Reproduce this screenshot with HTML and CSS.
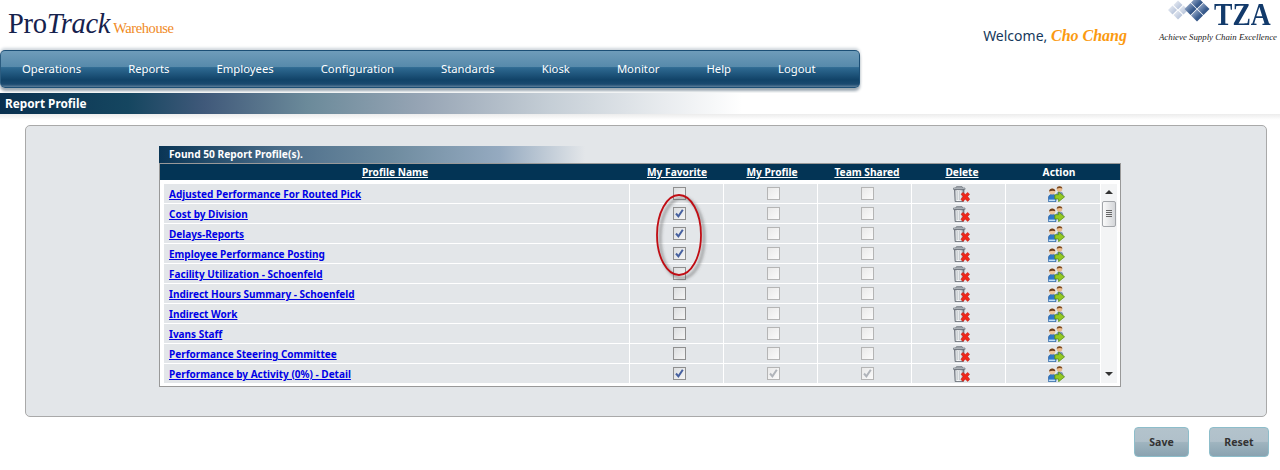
FILE: index.html
```html
<!DOCTYPE html>
<html lang="en">
<head>
<meta charset="utf-8">
<title>Report Profile</title>
<link rel="stylesheet" href="styles.css">
</head>
<body>
<svg class="defs" width="0" height="0" aria-hidden="true">
  <defs>
    <linearGradient id="can" x1="0" x2="1" y1="0" y2="0">
      <stop offset="0" stop-color="#a4aab1"/><stop offset=".3" stop-color="#fafbfb"/><stop offset=".7" stop-color="#e2e5e8"/><stop offset="1" stop-color="#6d747c"/>
    </linearGradient>
    <linearGradient id="dlight" x1="0" x2="1" y1="0" y2="1">
      <stop offset="0" stop-color="#eef1f6"/><stop offset="1" stop-color="#a9b8d3"/>
    </linearGradient>
    <linearGradient id="ddark" x1="0" x2="1" y1="0" y2="1">
      <stop offset="0" stop-color="#b4c2da"/><stop offset=".6" stop-color="#3d5f90"/><stop offset="1" stop-color="#1d3f70"/>
    </linearGradient>
    <symbol id="trash" viewBox="0 0 17 16">
      <path d="M3.500.5h5.500l.8 1.400H2.700z" fill="#e6e8eb" stroke="#767d85" stroke-width=".8"/>
      <path d="M.5 2h11.500v1.500H.5z" fill="#cdd2d7" stroke="#767d85" stroke-width=".8"/>
      <path d="M1.500 3.700h9.500l-.6 11.800H2.100z" fill="url(#can)" stroke="#5f666e" stroke-width=".8"/>
      <path d="M4.300 5v9M6.300 5v9" stroke="#aeb3b9" stroke-width=".7"/>
      <path d="M8 8.200l2-1.700 2.300 1.900 2.300-1.900 2 1.700-2 2.300 2.200 2.700-2 2.200-2.500-2.200-2.500 2.200-1.900-2.200 2.200-2.700z" fill="#f0281a" stroke="#b81a12" stroke-width=".5"/>
    </symbol>
    <symbol id="people" viewBox="0 0 17 16">
      <path d="M8 10c0-3 1.500-4.600 3.500-4.600s3.800 1.200 3.800 3.400V11H8z" fill="#7f96b5"/>
      <circle cx="11.500" cy="3" r="2.800" fill="#e9b98a"/>
      <path d="M8.700 2.800C9 -.3 14 -.5 14.400 2.600 13 1.700 10.500 1.800 8.700 2.800z" fill="#7b4a21"/>
      <path d="M.4 15.500v-3.400c0-2.600 1.800-3.800 3.800-3.800s3.800 1.200 3.800 3.800v3.400z" fill="#2f79c8" stroke="#1d5596" stroke-width=".6"/>
      <path d="M.8 13.600h6.500v1.500H.8z" fill="#c4e0f7"/>
      <circle cx="4.200" cy="5.400" r="3" fill="#eec39a"/>
      <path d="M1.100 5.600C1 1.700 7.100 1.600 7.400 5.200 5.500 4.300 3 4.500 1.100 5.600z" fill="#6f3f1a"/>
      <path d="M6.800 8.700h3.800V6l6 4.800-6 4.900V13H6.800z" fill="#94c823" stroke="#4f8a10" stroke-width=".7"/>
    </symbol>
    <symbol id="tick" viewBox="0 0 13 13">
      <path d="M3 6.500l2.400 2.800L9.800 2.800" fill="none" stroke="currentColor" stroke-width="2"/>
    </symbol>
  </defs>
</svg>

<header class="top">
  <div class="brand"><span class="pro">Pro<i>Track</i></span><span class="wh">Warehouse</span></div>
  <div class="account">
    <div class="welcome">Welcome, <em>Cho Chang</em></div>
    <div class="tza">
      <div class="tza-row">
        <svg class="tza-mark" width="48" height="22" viewBox="0 0 48 22" aria-hidden="true">
          <g fill="url(#dlight)">
            <path d="M12 .5l4.500 4.500L12 9.500 7.500 5z"/>
            <path d="M6.500 5.500L11 10l-4.500 4.500L2 10z"/>
            <path d="M17.500 5.500L22 10l-4.500 4.500L13 10z"/>
            <path d="M12 10.500l4.500 4.500-4.500 4.500L7.500 15z"/>
          </g>
          <g fill="url(#ddark)">
            <path d="M31 -3.500l6 6-6 6-6-6z"/>
            <path d="M24.500 3l6 6-6 6-6-6z"/>
            <path d="M37.500 3l6 6-6 6-6-6z"/>
            <path d="M31 9.500l6 6-6 6-6-6z"/>
          </g>
        </svg>
        <span class="tza-name">TZA</span>
      </div>
      <div class="tza-tag">Achieve Supply Chain Excellence</div>
    </div>
  </div>
</header>

<nav class="nav">
  <a>Operations</a><a>Reports</a><a>Employees</a><a>Configuration</a><a>Standards</a><a>Kiosk</a><a>Monitor</a><a>Help</a><a>Logout</a>
</nav>

<div class="title">Report Profile</div>

<main class="panel">
  <div class="found">Found 50 Report Profile(s).</div>
  <div class="grid">
    <div class="grid-head">
      <a>Profile Name</a><a>My Favorite</a><a>My Profile</a><a>Team Shared</a><a>Delete</a><span>Action</span>
    </div>
    <div class="grid-body">
      <div class="rows">
        <div class="row"><a class="name">Adjusted Performance For Routed Pick</a><div class="cell"><span class="cb fav"></span></div><div class="cell"><span class="cb"></span></div><div class="cell"><span class="cb"></span></div><div class="cell"><svg class="ico"><use href="#trash"/></svg></div><div class="cell"><svg class="ico"><use href="#people"/></svg></div></div>
        <div class="row"><a class="name">Cost by Division</a><div class="cell"><span class="cb fav on"><svg><use href="#tick"/></svg></span></div><div class="cell"><span class="cb"></span></div><div class="cell"><span class="cb"></span></div><div class="cell"><svg class="ico"><use href="#trash"/></svg></div><div class="cell"><svg class="ico"><use href="#people"/></svg></div></div>
        <div class="row"><a class="name">Delays-Reports</a><div class="cell"><span class="cb fav on"><svg><use href="#tick"/></svg></span></div><div class="cell"><span class="cb"></span></div><div class="cell"><span class="cb"></span></div><div class="cell"><svg class="ico"><use href="#trash"/></svg></div><div class="cell"><svg class="ico"><use href="#people"/></svg></div></div>
        <div class="row"><a class="name">Employee Performance Posting</a><div class="cell"><span class="cb fav on"><svg><use href="#tick"/></svg></span></div><div class="cell"><span class="cb"></span></div><div class="cell"><span class="cb"></span></div><div class="cell"><svg class="ico"><use href="#trash"/></svg></div><div class="cell"><svg class="ico"><use href="#people"/></svg></div></div>
        <div class="row"><a class="name">Facility Utilization - Schoenfeld</a><div class="cell"><span class="cb fav"></span></div><div class="cell"><span class="cb"></span></div><div class="cell"><span class="cb"></span></div><div class="cell"><svg class="ico"><use href="#trash"/></svg></div><div class="cell"><svg class="ico"><use href="#people"/></svg></div></div>
        <div class="row"><a class="name">Indirect Hours Summary - Schoenfeld</a><div class="cell"><span class="cb fav"></span></div><div class="cell"><span class="cb"></span></div><div class="cell"><span class="cb"></span></div><div class="cell"><svg class="ico"><use href="#trash"/></svg></div><div class="cell"><svg class="ico"><use href="#people"/></svg></div></div>
        <div class="row"><a class="name">Indirect Work</a><div class="cell"><span class="cb fav"></span></div><div class="cell"><span class="cb"></span></div><div class="cell"><span class="cb"></span></div><div class="cell"><svg class="ico"><use href="#trash"/></svg></div><div class="cell"><svg class="ico"><use href="#people"/></svg></div></div>
        <div class="row"><a class="name">Ivans Staff</a><div class="cell"><span class="cb fav"></span></div><div class="cell"><span class="cb"></span></div><div class="cell"><span class="cb"></span></div><div class="cell"><svg class="ico"><use href="#trash"/></svg></div><div class="cell"><svg class="ico"><use href="#people"/></svg></div></div>
        <div class="row"><a class="name">Performance Steering Committee</a><div class="cell"><span class="cb fav"></span></div><div class="cell"><span class="cb"></span></div><div class="cell"><span class="cb"></span></div><div class="cell"><svg class="ico"><use href="#trash"/></svg></div><div class="cell"><svg class="ico"><use href="#people"/></svg></div></div>
        <div class="row"><a class="name">Performance by Activity (0%) - Detail</a><div class="cell"><span class="cb fav on"><svg><use href="#tick"/></svg></span></div><div class="cell"><span class="cb on off"><svg><use href="#tick"/></svg></span></div><div class="cell"><span class="cb on off"><svg><use href="#tick"/></svg></span></div><div class="cell"><svg class="ico"><use href="#trash"/></svg></div><div class="cell"><svg class="ico"><use href="#people"/></svg></div></div>
      </div>
      <div class="scroll">
        <span class="arrow up"></span>
        <span class="thumb"><i></i><i></i><i></i><i></i></span>
        <span class="arrow down"></span>
      </div>
    </div>
  </div>
  <svg class="ring" width="60" height="96" viewBox="0 0 60 96" aria-hidden="true">
    <defs><filter id="soft" x="-30%" y="-30%" width="160%" height="160%"><feGaussianBlur stdDeviation="1.800"/></filter></defs>
    <ellipse cx="27" cy="46" rx="22" ry="40" fill="none" stroke="#555" stroke-opacity=".55" stroke-width="2.500" filter="url(#soft)"/>
    <ellipse cx="24" cy="43" rx="22" ry="40" fill="none" stroke="#c00d14" stroke-width="1.800"/>
  </svg>
</main>

<div class="actions">
  <button class="btn save">Save</button>
  <button class="btn reset">Reset</button>
</div>
</body>
</html>
```
FILE: styles.css
```css
* { box-sizing: border-box; }
html, body { margin: 0; padding: 0; height: 470px; overflow: hidden; background: #fff; }
body { font-family: "Noto Sans", "DejaVu Sans", sans-serif; font-size: 11px; color: #222; }
.defs { position: absolute; }

.top { height: 47px; display: flex; justify-content: space-between; }
.brand { padding: 6px 0 0 8px; display: flex; align-items: baseline; height: 47px; }
.pro { font-family: "Liberation Serif", serif; font-size: 28.500px; line-height: 36px; color: #16224d; letter-spacing: -.3px; }
.pro i { font-style: italic; }
.wh { font-family: "Liberation Serif", serif; font-size: 14.500px; letter-spacing: -.4px; color: #f08a24; margin-left: 3px; }
.account { display: flex; }
.welcome { font-size: 14px; line-height: 20px; margin: 26px 32px 0 0; color: #16395c; white-space: nowrap; }
.welcome em { font-family: "Liberation Serif", serif; font-weight: bold; font-size: 16px; color: #fb9a10; }
.tza { width: 121px; white-space: nowrap; }
.tza-row { display: flex; height: 30px; padding-left: 7px; }
.tza-mark { flex: none; }
.tza-name { display: block; width: 57px; height: 30px; font-family: "Liberation Serif", serif; font-weight: bold; font-size: 31px; line-height: 30px; color: #123a6b; transform: scaleX(.89); transform-origin: left top; }
.tza-tag { font-family: "Liberation Serif", serif; font-style: italic; font-size: 8.800px; line-height: 12px; color: #222; margin-top: 1px; }

.nav {
  margin-top: 3px; width: 860px; height: 38px; padding-left: 21px;
  display: flex; gap: 47px; align-items: center;
  border: 1px solid #1c4f76; border-left-color: #2b5c80; border-radius: 5px;
  background: linear-gradient(#6f9cba 0, #578aab 44%, #2f6a92 46%, #114368 80%, #1a4a70 92%, #5d7e9a 100%);
  box-shadow: 0 -2px 3px #cfd6dc, 0 3px 3px #9aa6b0;
  color: #fff; font-size: 11.300px; line-height: 16px;
}
.nav a { white-space: nowrap; }

.title {
  position: relative; margin-top: 5px; height: 21px; padding-left: 5px;
  font-size: 11.800px; font-weight: bold; line-height: 20px; color: #fff;
  background: linear-gradient(90deg, #09304f 0, #154660 10%, #40597a 16%, #6b8a9a 24%, #97a5b5 33%, #c5ced6 43%, #e9ecef 52%, #fff 58%);
}
.title::after {
  content: ""; position: absolute; left: 0; right: 0; top: 21px; height: 6px;
  background: linear-gradient(#ececec, #fff);
}

.panel {
  position: relative; margin: 11px 13px 0 25px; height: 292px; padding: 20px 0 0 133px;
  background: #e3e6e9; border: 1px solid #a9a9a9; border-radius: 5px;
}
.found {
  width: 426px; height: 17px; padding-left: 10px;
  font-weight: bold; font-size: 10.200px; line-height: 17px; color: #fff;
  background: linear-gradient(90deg, #0a3555 0, #1b4564 8%, #4f708c 30%, #6f8ca0 55%, #95aac0 80%, #e3e6e9 100%);
}
.grid { width: 962px; height: 224px; background: #fff; border: 1px solid #999; }
.grid-head {
  display: grid; grid-template-columns: 470px 94px 96px 94px 96px 98px; height: 16px;
  background: #033455; color: #fff; font-weight: bold; font-size: 10.200px; line-height: 16px; text-align: center;
}
.grid-head a { text-decoration: underline; }
.grid-body { display: flex; padding: 4px 0 0 4px; }
.row {
  display: grid; grid-template-columns: 465px 93px 93px 93px 93px 94px; grid-template-rows: 19px; column-gap: 1px;
  height: 20px; padding-bottom: 1px; width: 936px;
}
.row > * { background: #e3e6e9; }
.name { padding: 1px 0 0 5px; color: #0000e6; font-weight: bold; font-size: 10px; line-height: 18px; text-decoration: underline; white-space: nowrap; }
.cell { display: flex; align-items: center; justify-content: center; padding-left: 6px; }
.cb { display: block; position: relative; width: 13px; height: 13px; border: 1px solid #b5b5b5; background: linear-gradient(135deg, #e9e9e9, #fbfbfb); color: #b0b4ba; }
.cb svg { position: absolute; left: -1px; top: -1px; width: 13px; height: 13px; }
.cb.fav { border: 1.500px solid #8f8f8f; background: linear-gradient(135deg, #dcdee0, #f4f4f4); color: #46609f; }
.ico { display: block; width: 17px; height: 16px; }

.scroll { position: relative; width: 16px; height: 199px; margin-left: 1px; background: #f3f4f5; }
.arrow { position: absolute; left: 4px; width: 0; height: 0; border-left: 4px solid transparent; border-right: 4px solid transparent; }
.arrow.up { top: 6px; border-bottom: 4px solid #333; }
.arrow.down { bottom: 7px; border-top: 4px solid #333; }
.thumb {
  position: absolute; left: 1px; top: 17px; width: 14px; height: 26px; padding: 8px 3px 0;
  border: 1px solid #a3a6aa; border-radius: 2px; background: linear-gradient(90deg, #fafafa, #d4d6d9);
}
.thumb i { display: block; height: 1px; margin-bottom: 1px; background: #666; }

.ring { position: absolute; left: 629px; top: 66px; }

.actions { display: flex; justify-content: flex-end; gap: 20px; margin: 10px 11px 0 0; }
.btn {
  height: 30px; padding: 0; border: 1px solid #8dbdca; border-radius: 4px;
  background: linear-gradient(#b3c3cc 0, #b0c0ca 48%, #9fb4bf 52%, #8aa3b1 100%);
  font-family: "Noto Sans", sans-serif; font-size: 10.500px; font-weight: bold; color: #333;
}
.save { width: 55px; }
.reset { width: 60px; }
```
